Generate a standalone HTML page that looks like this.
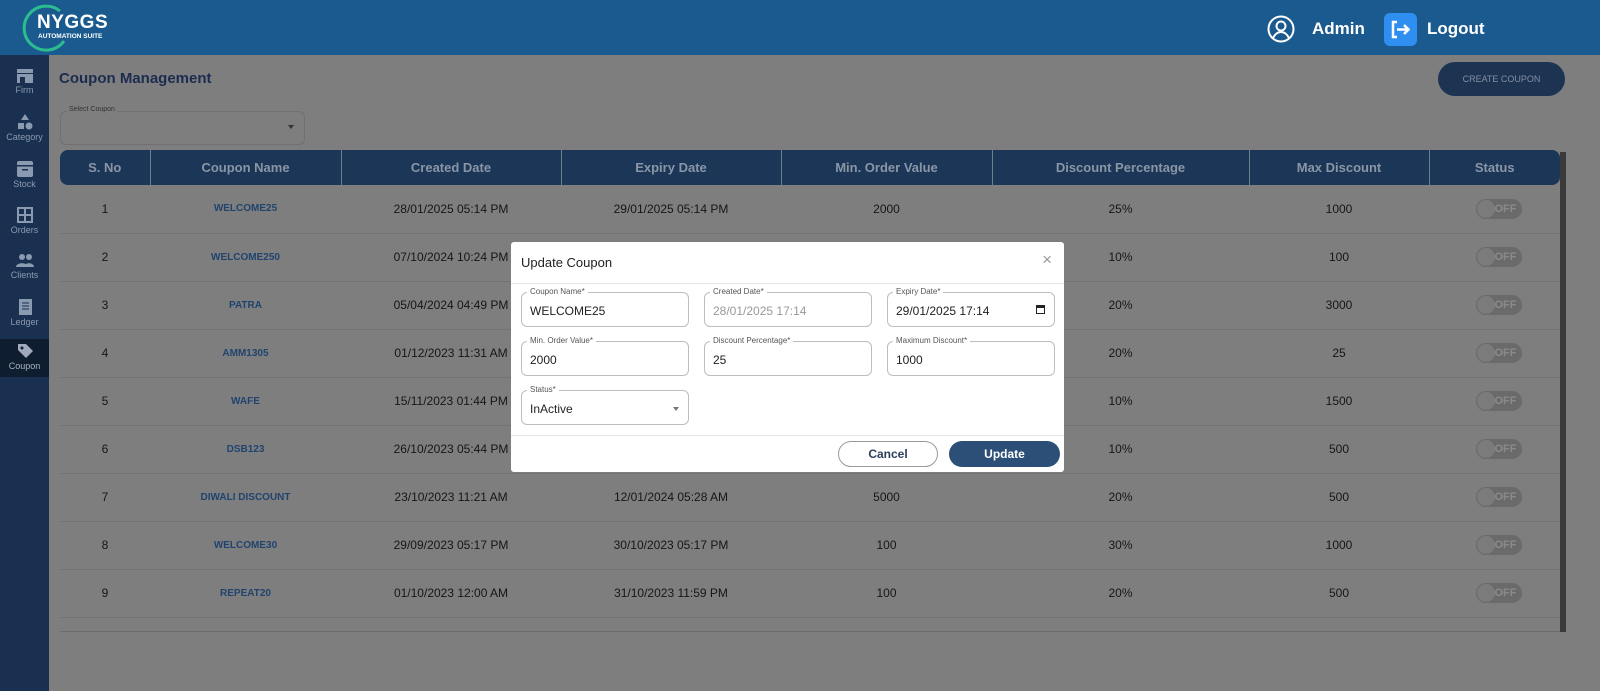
<!DOCTYPE html>
<html><head><style>
*{box-sizing:border-box;margin:0;padding:0}
body{width:1600px;height:691px;overflow:hidden;font-family:"Liberation Sans",Arial,sans-serif;background:#7e7e7e;position:relative}
.hdr{position:absolute;left:0;top:0;width:1600px;height:55px;background:#1a5a8f;color:#fff}
.side{position:absolute;left:0;top:55px;width:49px;height:636px;background:#1a3050}
.si{position:absolute;left:0;width:49px;height:46px;text-align:center;color:#8a9ab0;font-size:9px}
.si svg{display:block;margin:3px auto 1px}
.main{position:absolute;left:49px;top:55px;width:1551px;height:636px;background:#7e7e7e}
table{position:absolute;left:60px;top:150px;width:1500px;border-collapse:collapse;font-size:12px;color:#161616}
th{background:#1c3658;color:#8a96a6;height:35px;font-size:13px;border-right:1px solid #6d7d90}
th:last-child{border-right:none}
td{height:48px;text-align:center;border-bottom:1px solid #737373}
td.l{color:#21446e;font-weight:bold;font-size:10px}
.tg{display:inline-block;width:46px;height:20px;border-radius:10px;background:#6a6a6a;position:relative;vertical-align:middle;margin-left:8px}
.tg:before{content:"";position:absolute;left:1px;top:1px;width:18px;height:18px;border-radius:50%;background:#7b7b7b}
.tg:after{content:"OFF";position:absolute;left:19px;top:4px;font-size:11px;color:#8a8a8a;font-weight:bold}
.modal{position:absolute;left:511px;top:242px;width:553px;height:230px;background:#fff;border-radius:3px}
.f{position:absolute;width:168px;height:35px;border:1px solid #bdbdbd;border-radius:6px;font-size:12px;color:#222;padding:11px 0 0 8px}
.f span{position:absolute;left:5px;top:-6px;background:#fff;padding:0 3px;font-size:8px;color:#555}
.btn{position:absolute;top:441px;height:26px;border-radius:13px;font-size:12px;font-weight:bold;text-align:center;line-height:24px}
</style></head><body>
<div class="hdr">
 <svg style="position:absolute;left:20px;top:3px" width="50" height="50" viewBox="0 0 50 50"><path d="M40 8 A22 22 0 1 0 44 38" fill="none" stroke="#2bbd8e" stroke-width="3"/></svg>
 <div style="position:absolute;left:37px;top:12px;font-size:19px;font-weight:bold;letter-spacing:0.5px">NYGGS</div>
 <div style="position:absolute;left:38px;top:33px;font-size:6.5px;font-weight:bold">AUTOMATION SUITE</div>
 <svg style="position:absolute;left:1267px;top:15px" width="28" height="28" viewBox="0 0 28 28" fill="none" stroke="#fff" stroke-width="2"><circle cx="14" cy="14" r="12.5"/><circle cx="14" cy="11" r="4.5"/><path d="M6 23c2-4 5-6 8-6s6 2 8 6"/></svg>
 <div style="position:absolute;left:1312px;top:19px;font-size:17px;font-weight:bold">Admin</div>
 <div style="position:absolute;left:1384px;top:13px;width:33px;height:33px;background:#2f8ff0;border-radius:6px"><svg width="33" height="33" viewBox="0 0 33 33" fill="none" stroke="#fff" stroke-width="2.5"><path d="M13 9h-4v15h4M13 16.5h11M20 12l4.5 4.5L20 21"/></svg></div>
 <div style="position:absolute;left:1427px;top:19px;font-size:17px;font-weight:bold">Logout</div>
</div>
<div class="side">
 <div class="si" style="top:10px"><svg width="18" height="16"><rect x="1" y="1" width="16" height="4" fill="#8a9ab0"/><rect x="1" y="6" width="16" height="9" fill="#8a9ab0"/><rect x="4" y="9" width="5" height="6" fill="#1a3050"/></svg>Firm</div>
 <div class="si" style="top:55px"><svg width="18" height="18"><path d="M9 1l4 6H5z" fill="#8a9ab0"/><rect x="2" y="10" width="6" height="6" fill="#8a9ab0"/><circle cx="13" cy="13" r="3.5" fill="#8a9ab0"/></svg>Category</div>
 <div class="si" style="top:102px"><svg width="18" height="18"><rect x="1" y="1" width="16" height="16" rx="2" fill="#8a9ab0"/><rect x="1" y="5" width="16" height="1.5" fill="#1a3050"/><rect x="6" y="9" width="6" height="1.5" fill="#1a3050"/></svg>Stock</div>
 <div class="si" style="top:148px"><svg width="18" height="18" fill="none" stroke="#8a9ab0" stroke-width="2"><rect x="2" y="2" width="14" height="14"/><path d="M9 2v14M2 9h14"/></svg>Orders</div>
 <div class="si" style="top:195px"><svg width="20" height="16"><circle cx="7" cy="4" r="3" fill="#8a9ab0"/><circle cx="14" cy="4" r="3" fill="#8a9ab0"/><path d="M1 14c0-5 12-5 12 0zM9 14c0-5 10-5 10 0z" fill="#8a9ab0"/></svg>Clients</div>
 <div class="si" style="top:240px"><svg width="18" height="18"><rect x="3" y="1" width="13" height="16" fill="#8a9ab0"/><path d="M6 5h7M6 8h7M6 11h7" stroke="#1a3050"/></svg>Ledger</div>
 <div class="si" style="top:284px;height:38px;background:#0f1d30;color:#aab4c2"><svg width="18" height="18"><path d="M2 2h8l7 7-7 7-8-8z" fill="#a0aabb"/><circle cx="6" cy="6" r="1.5" fill="#0f1d30"/></svg>Coupon</div>
</div>
<div class="main"></div>
<div style="position:absolute;left:59px;top:70px;font-size:15px;font-weight:bold;color:#1c2c50">Coupon Management</div>
<div style="position:absolute;left:60px;top:111px;width:245px;height:34px;border:1px solid #707070;border-radius:6px"><span style="position:absolute;left:6px;top:-6px;font-size:7px;color:#333;background:#7e7e7e;padding:0 2px">Select Coupon</span><span style="position:absolute;right:10px;top:13px;border:3px solid transparent;border-top:4px solid #333"></span></div>
<div style="position:absolute;left:1438px;top:62px;width:127px;height:34px;border-radius:17px;background:#1c3352;color:#8390a4;font-size:9px;text-align:center;line-height:34px">CREATE COUPON</div>
<table>
<tr><th style="width:90px;border-radius:8px 0 0 8px">S. No</th><th style="width:191px">Coupon Name</th><th style="width:220px">Created Date</th><th style="width:220px">Expiry Date</th><th style="width:211px">Min. Order Value</th><th style="width:257px">Discount Percentage</th><th style="width:180px">Max Discount</th><th style="border-radius:0 8px 8px 0">Status</th></tr>
<tr><td>1</td><td class="l">WELCOME25</td><td>28/01/2025 05:14 PM</td><td>29/01/2025 05:14 PM</td><td>2000</td><td>25%</td><td>1000</td><td><span class="tg"></span></td></tr>
<tr><td>2</td><td class="l">WELCOME250</td><td>07/10/2024 10:24 PM</td><td></td><td></td><td>10%</td><td>100</td><td><span class="tg"></span></td></tr>
<tr><td>3</td><td class="l">PATRA</td><td>05/04/2024 04:49 PM</td><td></td><td></td><td>20%</td><td>3000</td><td><span class="tg"></span></td></tr>
<tr><td>4</td><td class="l">AMM1305</td><td>01/12/2023 11:31 AM</td><td></td><td></td><td>20%</td><td>25</td><td><span class="tg"></span></td></tr>
<tr><td>5</td><td class="l">WAFE</td><td>15/11/2023 01:44 PM</td><td></td><td></td><td>10%</td><td>1500</td><td><span class="tg"></span></td></tr>
<tr><td>6</td><td class="l">DSB123</td><td>26/10/2023 05:44 PM</td><td></td><td></td><td>10%</td><td>500</td><td><span class="tg"></span></td></tr>
<tr><td>7</td><td class="l">DIWALI DISCOUNT</td><td>23/10/2023 11:21 AM</td><td>12/01/2024 05:28 AM</td><td>5000</td><td>20%</td><td>500</td><td><span class="tg"></span></td></tr>
<tr><td>8</td><td class="l">WELCOME30</td><td>29/09/2023 05:17 PM</td><td>30/10/2023 05:17 PM</td><td>100</td><td>30%</td><td>1000</td><td><span class="tg"></span></td></tr>
<tr><td>9</td><td class="l">REPEAT20</td><td>01/10/2023 12:00 AM</td><td>31/10/2023 11:59 PM</td><td>100</td><td>20%</td><td>500</td><td><span class="tg"></span></td></tr>
</table>
<div style="position:absolute;left:60px;top:631px;width:1500px;height:1px;background:#6d6d6d"></div>
<div style="position:absolute;left:1560px;top:152px;width:6px;height:480px;background:#3a3a3a"></div>
<div class="modal">
 <div style="position:absolute;left:10px;top:13px;font-size:13px;color:#222">Update Coupon</div>
 <div style="position:absolute;right:12px;top:8px;font-size:17px;color:#999">×</div>
 <div style="position:absolute;left:0;top:41px;width:553px;height:1px;background:#e6e6e6"></div>
 <div style="position:absolute;left:0;top:193px;width:553px;height:1px;background:#e6e6e6"></div>
</div>
<div class="f" style="left:521px;top:292px"><span>Coupon Name*</span>WELCOME25</div>
<div class="f" style="left:704px;top:292px;color:#999"><span>Created Date*</span>28/01/2025 17:14</div>
<div class="f" style="left:887px;top:292px"><span>Expiry Date*</span>29/01/2025 17:14<b style="position:absolute;right:9px;top:12px;width:9px;height:9px;border:1.5px solid #222;border-top-width:3px"></b></div>
<div class="f" style="left:521px;top:341px"><span>Min. Order Value*</span>2000</div>
<div class="f" style="left:704px;top:341px"><span>Discount Percentage*</span>25</div>
<div class="f" style="left:887px;top:341px"><span>Maximum Discount*</span>1000</div>
<div class="f" style="left:521px;top:390px"><span>Status*</span>InActive<b style="position:absolute;right:9px;top:16px;border:3px solid transparent;border-top:4px solid #777"></b></div>
<div class="btn" style="left:838px;width:100px;border:1px solid #999;color:#2b3f5c;background:#fff">Cancel</div>
<div class="btn" style="left:949px;width:111px;background:#2c4f78;color:#fff;line-height:26px">Update</div>
</body></html>
